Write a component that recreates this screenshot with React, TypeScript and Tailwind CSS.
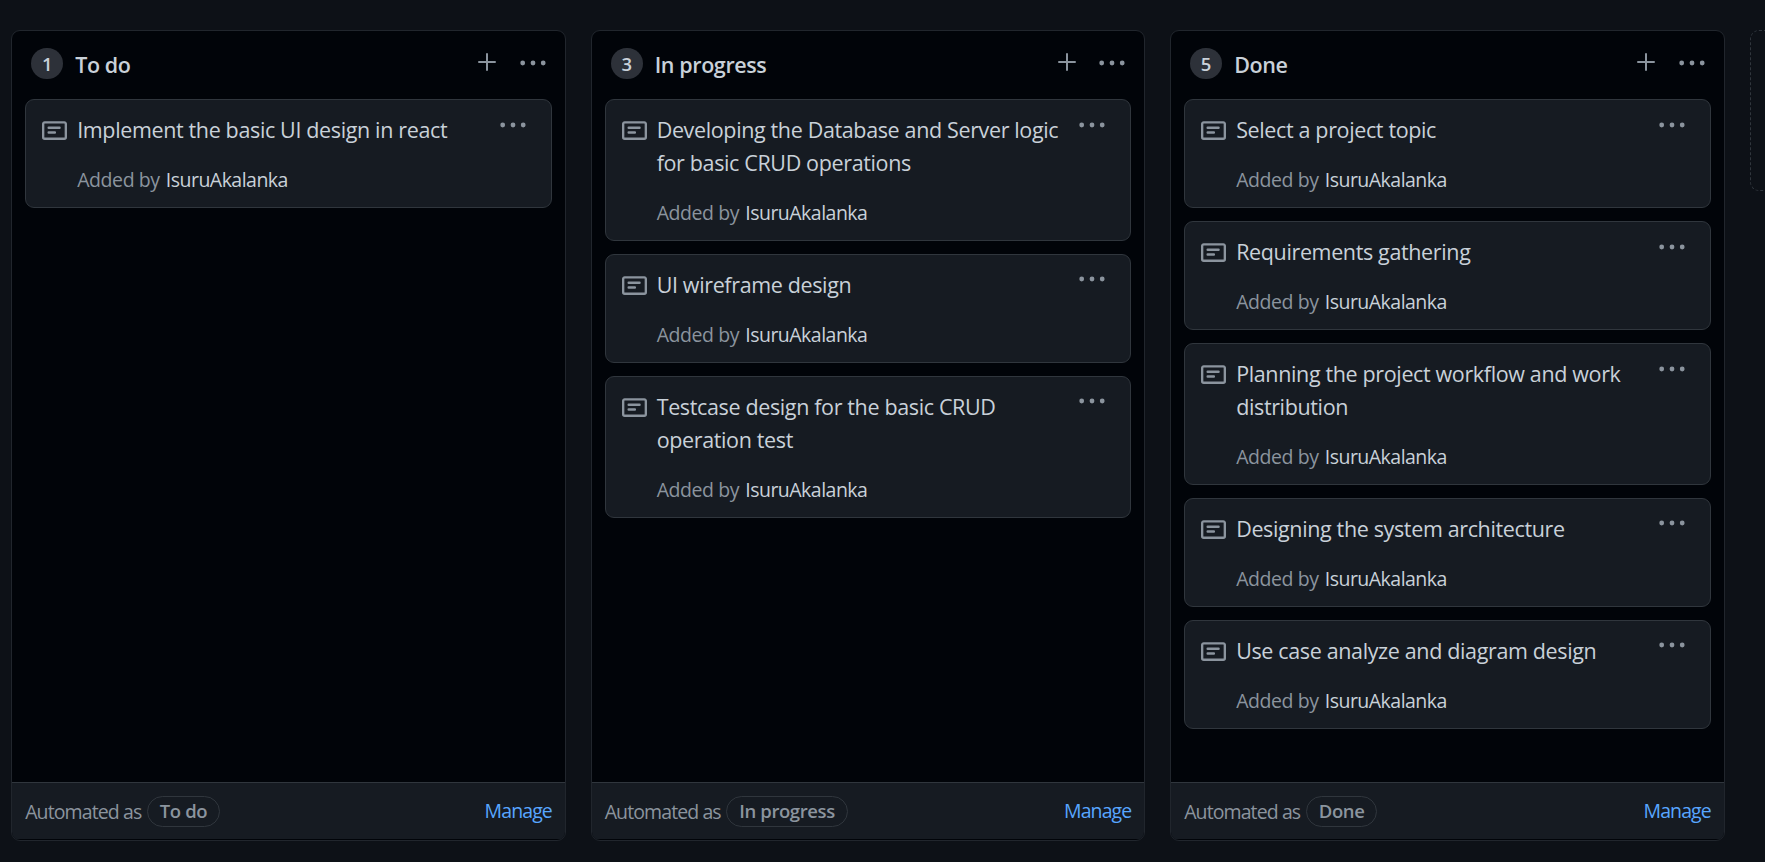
const AUTHOR = 'IsuruAkalanka';

type ColumnData = { title: string; cards: string[][] };

const COLUMNS: ColumnData[] = [
  { title: 'To do', cards: [['Implement the basic UI design in react']] },
  {
    title: 'In progress',
    cards: [
      ['Developing the Database and Server logic', 'for basic CRUD operations'],
      ['UI wireframe design'],
      ['Testcase design for the basic CRUD', 'operation test'],
    ],
  },
  {
    title: 'Done',
    cards: [
      ['Select a project topic'],
      ['Requirements gathering'],
      ['Planning the project workflow and work', 'distribution'],
      ['Designing the system architecture'],
      ['Use case analyze and diagram design'],
    ],
  },
];

function Dots() {
  return (
    <svg width="26" height="6" viewBox="0 0 26 6" fill="#8b949e" className="block">
      <circle cx="2.7" cy="3" r="2.4" />
      <circle cx="13" cy="3" r="2.4" />
      <circle cx="23.2" cy="3" r="2.4" />
    </svg>
  );
}

function Plus() {
  return (
    <svg width="18" height="18" viewBox="0 0 18 18" stroke="#8b949e" strokeWidth="2" strokeLinecap="round" className="block">
      <path d="M9 1v16M1 9h16" />
    </svg>
  );
}

function NoteIcon() {
  return (
    <svg width="25" height="25" viewBox="0 0 16 16" fill="#8b949e" className="block shrink-0">
      <path
        fillRule="evenodd"
        d="M0 3.75C0 2.784.784 2 1.75 2h12.5c.966 0 1.75.784 1.75 1.75v8.5A1.75 1.75 0 0 1 14.25 14H1.75A1.75 1.75 0 0 1 0 12.25v-8.5Zm1.75-.25a.25.25 0 0 0-.25.25v8.5c0 .138.112.25.25.25h12.5a.25.25 0 0 0 .25-.25v-8.5a.25.25 0 0 0-.25-.25H1.75ZM3.5 6.25a.75.75 0 0 1 .75-.75h7a.75.75 0 0 1 0 1.5h-7a.75.75 0 0 1-.75-.75Zm.75 2.25a.75.75 0 0 0 0 1.5h4a.75.75 0 0 0 0-1.5h-4Z"
      />
    </svg>
  );
}

function Card({ lines }: { lines: string[] }) {
  return (
    <article className="flex rounded-[9px] border border-[#30363d] bg-[#161b22] pt-[14px] pr-[25px] pb-[12.5px] pl-[16.3px]">
      <div className="pt-[3.8px]">
        <NoteIcon />
      </div>
      <div className="min-w-0 flex-1 pl-[9.7px] whitespace-nowrap">
        <h3 className="text-[21.5px] leading-[32.8px] tracking-[-0.36px] text-[#c9d1d9]">
          {lines.map((line) => (
            <span key={line} className="block">{line}</span>
          ))}
        </h3>
        <p className="mt-[17.2px] text-[19.5px] leading-[31px] tracking-[-0.42px] text-[#8b949e]">
          Added by <span className="ml-[1.5px] tracking-[-0.52px] text-[#c9d1d9]">{AUTHOR}</span>
        </p>
      </div>
      <button className="h-[6px] pt-[7.7px]" aria-label="Card options">
        <Dots />
      </button>
    </article>
  );
}

function Column({ column }: { column: ColumnData }) {
  return (
    <section className="flex h-[811px] w-[554.7px] shrink-0 flex-col overflow-hidden rounded-[9px] border border-[#21262d] bg-[#010409]">
      <header className="flex h-[68px] shrink-0 items-center pr-[19px] pl-[19px]">
        <span className="mt-[-3px] flex h-[31px] w-[32px] items-center justify-center rounded-full bg-[#2d3139] text-[18.5px] font-semibold text-[#c9d1d9]">
          {column.cards.length}
        </span>
        <h2 className="mt-[-2px] ml-[12px] flex-1 text-[21.5px] leading-[33px] font-semibold tracking-[-0.4px] text-[#c9d1d9]">{column.title}</h2>
        <button className="mt-[-6px] mr-[23.5px]" aria-label="Add"><Plus /></button>
        <button className="mt-[-5px]" aria-label="Column options"><Dots /></button>
      </header>
      <div className="flex flex-1 flex-col gap-[12.5px] px-[13px]">
        {column.cards.map((lines) => (
          <Card key={lines[0]} lines={lines} />
        ))}
      </div>
      <footer className="mb-px flex h-[57px] shrink-0 items-center border-t border-[#30363d] bg-[#161b22] px-[13px] text-[19.5px] tracking-[-0.9px] text-[#8b949e]">
        <span className="pt-[2px]">Automated as</span>
        <span className="ml-[5.5px] flex h-[31px] items-center rounded-full border border-[#30363d] px-[12px] pb-px text-[18.5px] font-semibold tracking-[-0.4px]">{column.title}</span>
        <a className="ml-auto tracking-[-0.9px] text-[#58a6ff]">Manage</a>
      </footer>
    </section>
  );
}

export default function App() {
  return (
    <main className="flex h-[862px] w-full gap-[24.8px] overflow-hidden bg-[#0d1117] pt-[30px] pl-[11.2px] font-['Open_Sans','Noto_Sans',sans-serif]">
      {COLUMNS.map((column) => (
        <Column key={column.title} column={column} />
      ))}
      <div className="h-[161px] w-[555px] shrink-0 rounded-[9px] border border-dashed border-[#30363d]" />
    </main>
  );
}
